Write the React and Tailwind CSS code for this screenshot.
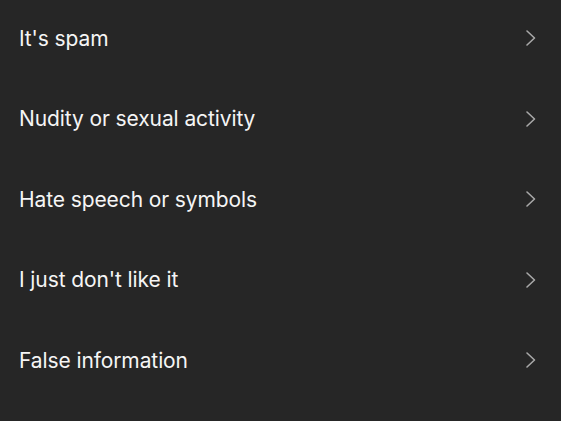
import React from "react";

const items = [
  "It's spam",
  "Nudity or sexual activity",
  "Hate speech or symbols",
  "I just don't like it",
  "False information",
];

function Chevron() {
  return (
    <svg width="12" height="18" viewBox="0 0 12 18" fill="none" className="shrink-0">
      <path d="M2 2l7.5 7-7.5 7" stroke="#a8a8a8" strokeWidth="1.6" strokeLinecap="round" strokeLinejoin="round" />
    </svg>
  );
}

export default function App() {
  return (
    <div
      className="w-[561px] h-[421px] overflow-hidden bg-[#262626] text-[#f5f5f5]"
      style={{ fontFamily: "Inter, 'Noto Sans', sans-serif" }}
    >
      <ul className="-mt-[2px]">
        {items.map((t) => (
          <li key={t} className="h-[80.5px] flex items-center justify-between pl-[19px] pr-[24px]">
            <span className="text-[21px] tracking-[-0.1px]">{t}</span>
            <Chevron />
          </li>
        ))}
      </ul>
    </div>
  );
}
